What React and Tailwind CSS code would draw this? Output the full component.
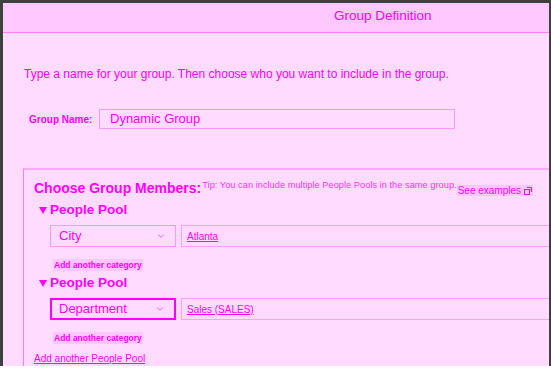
import { ChevronDown } from "lucide-react";

const font = { fontFamily: '"Liberation Sans", Arial, sans-serif' };

function Caret() {
  return (
    <svg width="8" height="7" viewBox="0 0 8 7" className="shrink-0">
      <polygon points="0,0 8,0 4,7" fill="#ff00ff" />
    </svg>
  );
}

function PeoplePool({ category, value, active }) {
  return (
    <div>
      <div className="flex items-center h-[16px] pl-[15px] gap-[3px]">
        <Caret />
        <span className="text-[13.5px] font-bold text-[#ff00ff] leading-none">
          People Pool
        </span>
      </div>
      <div className="flex mt-[7px] pl-[26px] gap-[5px]">
        <div
          className={`w-[126px] h-[22px] shrink-0 flex items-center justify-between pr-[9px] ${
            active
              ? "border-2 border-[#ff00ff] pl-[7px]"
              : "border border-[#ff99ff] pl-[8px]"
          }`}
        >
          <span className="text-[13px] text-[#ff00ff]">{category}</span>
          <ChevronDown className="w-[10px] h-[10px] text-[#ff00ff]" strokeWidth={1.5} />
        </div>
        <div className="w-[500px] h-[22px] shrink-0 border border-[#ffa0ff] flex items-center pl-[5px]">
          <span className="text-[10px] text-[#ff00ff] underline">{value}</span>
        </div>
      </div>
      <div className="flex pl-[29px] mt-[12px]">
        <span className="bg-[#ffc6ff] px-[1px] h-[12px] leading-[12px] text-[8.5px] font-bold text-[#ff00ff]">
          Add another category
        </span>
      </div>
    </div>
  );
}

export default function App() {
  return (
    <div style={font} className="w-[551px] h-[366px] bg-[#3f3f3f] pt-[3px] pl-[3px] pr-[2px] overflow-hidden">
      <div className="h-full bg-[#ffdcff] flex flex-col overflow-hidden">
        {/* Header */}
        <div className="h-[30px] shrink-0 bg-[#ffc8ff] border-b border-[#ff80ff] flex items-center pl-[331px]">
          <h1 className="text-[13.5px] text-[#ff00ff] leading-none -mt-[3px]">Group Definition</h1>
        </div>

        <p className="mt-[33px] pl-[21px] text-[12px] leading-[16px] text-[#ff00ff]">
          Type a name for your group. Then choose who you want to include in the group.
        </p>

        {/* Group name */}
        <div className="flex items-center mt-[27px] pl-[26px] gap-[6px]">
          <label className="text-[10px] font-bold text-[#ff00ff] w-[64px]">Group Name:</label>
          <div className="w-[356px] h-[20px] border border-[#ff99ff] flex items-center pl-[10px]">
            <span className="text-[13px] text-[#ff00ff]">Dynamic Group</span>
          </div>
        </div>

        {/* Members */}
        <div className="mt-[39px] ml-[20px] w-[600px] flex-1 border-t-2 border-l border-t-[#ffaaff] border-l-[#ff77ff]">
          <div className="flex items-start pt-[9px] pl-[10px]">
            <h2 className="text-[14px] font-bold text-[#ff00ff] leading-[18px]">
              Choose Group Members:
            </h2>
            <span className="text-[9.3px] text-[#ff33ff] leading-none mt-[2px] ml-[1px]">
              Tip: You can include multiple People Pools in the same group.
            </span>
            <span className="flex items-center gap-[2px] mt-[6px] bg-[#ffc6ff] px-[1px] h-[11px]">
              <span className="text-[10px] text-[#ff00ff] leading-none">See examples</span>
              <svg width="8" height="8" viewBox="0 0 8 8" className="ml-[1px]">
                <rect x="0.5" y="2.5" width="5" height="5" fill="none" stroke="#ff00ff" />
                <path d="M3 0.5h4.5V5" fill="none" stroke="#ff00ff" />
              </svg>
            </span>
          </div>

          <div className="mt-[5px]">
            <PeoplePool category="City" value="Atlanta" />
          </div>
          <div className="mt-[4px]">
            <PeoplePool category="Department" value="Sales (SALES)" active />
          </div>

          <div className="flex pl-[10px] mt-[9px]">
            <span className="text-[10px] leading-[12px] text-[#ff00ff] underline">Add another People Pool</span>
          </div>
        </div>
      </div>
    </div>
  );
}
